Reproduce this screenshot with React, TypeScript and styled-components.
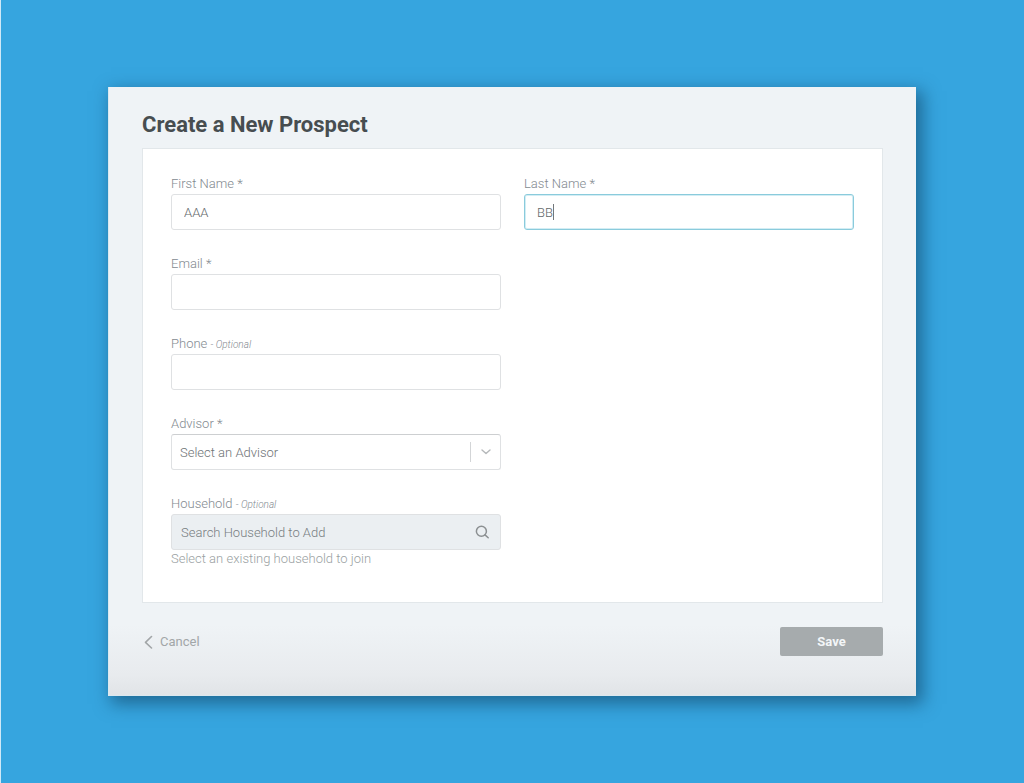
import React from 'react';
import styled, { createGlobalStyle, css } from 'styled-components';

const GlobalStyle = createGlobalStyle`
  *, *::before, *::after { box-sizing: border-box; }
  body {
    margin: 0;
    background: #36a5df;
    font-family: Roboto, "Liberation Sans", sans-serif;
    font-weight: 300;
    font-size: 13px;
    color: #7f8487;
  }
  button, input, select { font: inherit; color: inherit; }
`;

const Page = styled.main`
  min-height: 100vh;
  padding: 87px 108px 87px 107px;
  border-left: 1px solid #cfe9f7;
`;

const Dialog = styled.form`
  display: flex;
  flex-direction: column;
  padding: 24px 33px 39px;
  background: linear-gradient(to top, #e1e4e7 0, #e8ebee 20px, #eff3f6 70px);
  border: 1px solid #dbe8ef;
  border-width: 0 0 1px 1px;
  box-shadow: 5px 6px 16px 2px rgba(10, 50, 80, 0.5);
`;

const Title = styled.h1`
  margin: 0 0 9px;
  font-size: 22px;
  line-height: 28px;
  font-weight: 700;
  color: #474d50;
`;

const Panel = styled.div`
  display: grid;
  grid-template-columns: 1fr 1fr;
  gap: 24px 23px;
  padding: 25px 28px 35px;
  background: #fff;
  border: 1px solid #e2e7ea;
`;

const Field = styled.div`
  grid-column: ${(p: { $column?: number }) => p.$column ?? 1};
  display: flex;
  flex-direction: column;
`;

const Label = styled.label`
  line-height: 20px;
  color: #838a90;
`;

const Optional = styled.em`
  font-size: 10px;
  line-height: 10px;
`;

const Control = styled.div`
  position: relative;
  display: flex;
`;

const control = css`
  width: 100%;
  height: 36px;
  border: 1px solid #dfe1e3;
  border-radius: 3px;
  background: #fff;
  outline: none;
`;

const TextInput = styled.input<{ $active?: boolean }>`
  ${control}
  padding: 0 12px;
  color: #62676a;
  ${(p) => p.$active && css`
    border-color: #8acbdc;
    box-shadow: inset 0 0 0 1px #d3edf4;
  `}
`;

const SearchInput = styled.input`
  ${control}
  padding: 0 40px 0 9px;
  background: #ebeff2;
  &::placeholder { color: #777d81; opacity: 1; }
  &::-webkit-search-cancel-button { display: none; }
`;

const Select = styled.select`
  ${control}
  appearance: none;
  padding: 0 40px 0 8px;
  border-top-color: #cdcfd1;
  color: #6e7376;
`;

const Caret = styled.span`
  position: absolute;
  left: 29px;
  top: 10px;
  width: 1px;
  height: 16px;
  background: #73787b;
`;

const SelectMark = styled.span`
  position: absolute;
  right: 1px;
  top: 8px;
  display: flex;
  align-items: center;
  justify-content: center;
  width: 30px;
  height: 20px;
  border-left: 1px solid #d3d5d7;
  pointer-events: none;
`;

const SearchMark = styled.span`
  position: absolute;
  right: 11px;
  top: 10px;
  display: flex;
  pointer-events: none;
`;

const Help = styled.span`
  line-height: 17px;
  color: #9a9fa2;
`;

const Footer = styled.div`
  display: flex;
  align-items: center;
  justify-content: space-between;
  margin-top: 24px;
`;

const CancelButton = styled.button`
  display: flex;
  align-items: center;
  gap: 7px;
  padding: 0 2px;
  border: 0;
  background: none;
  line-height: 28px;
  font-weight: 400;
  color: #a2a6a8;
`;

const SaveButton = styled.button`
  width: 103px;
  height: 29px;
  padding: 0;
  border: 0;
  border-radius: 2px;
  background: #a6abad;
  font-weight: 700;
  color: #f3f6f8;
`;

export default function App() {
  return (
    <>
      <GlobalStyle />
      <Page>
        <Dialog onSubmit={(e) => e.preventDefault()}>
          <Title>Create a New Prospect</Title>
          <Panel>
            <Field>
              <Label htmlFor="first">First Name *</Label>
              <TextInput id="first" defaultValue="AAA" />
            </Field>
            <Field $column={2}>
              <Label htmlFor="last">Last Name *</Label>
              <Control>
                <TextInput id="last" defaultValue="BB" $active />
                <Caret />
              </Control>
            </Field>
            <Field>
              <Label htmlFor="email">Email *</Label>
              <TextInput id="email" type="email" />
            </Field>
            <Field>
              <Label htmlFor="phone">Phone <Optional>- Optional</Optional></Label>
              <TextInput id="phone" type="tel" />
            </Field>
            <Field>
              <Label htmlFor="advisor">Advisor *</Label>
              <Control>
                <Select id="advisor">
                  <option>Select an Advisor</option>
                </Select>
                <SelectMark>
                  <svg width="10" height="6" viewBox="0 0 10 6" fill="none" stroke="#b5b8ba" strokeWidth="1.4" strokeLinecap="round" strokeLinejoin="round">
                    <path d="M1 1L5 4.6L9 1" />
                  </svg>
                </SelectMark>
              </Control>
            </Field>
            <Field>
              <Label htmlFor="household">Household <Optional>- Optional</Optional></Label>
              <Control>
                <SearchInput id="household" type="search" placeholder="Search Household to Add" />
                <SearchMark>
                  <svg width="16" height="16" viewBox="0 0 16 16" fill="none" stroke="#8c9092" strokeWidth="1.5" strokeLinecap="round">
                    <circle cx="7.4" cy="7.2" r="5" />
                    <path d="M11 10.9L14.2 13.8" />
                  </svg>
                </SearchMark>
              </Control>
              <Help>Select an existing household to join</Help>
            </Field>
          </Panel>
          <Footer>
            <CancelButton type="button">
              <svg width="9" height="14" viewBox="0 0 9 14" fill="none" stroke="#a2a6a8" strokeWidth="1.6" strokeLinecap="round" strokeLinejoin="round">
                <path d="M7.5 1.5L1.5 7.3L7.5 13" />
              </svg>
              Cancel
            </CancelButton>
            <SaveButton type="submit">Save</SaveButton>
          </Footer>
        </Dialog>
      </Page>
    </>
  );
}
